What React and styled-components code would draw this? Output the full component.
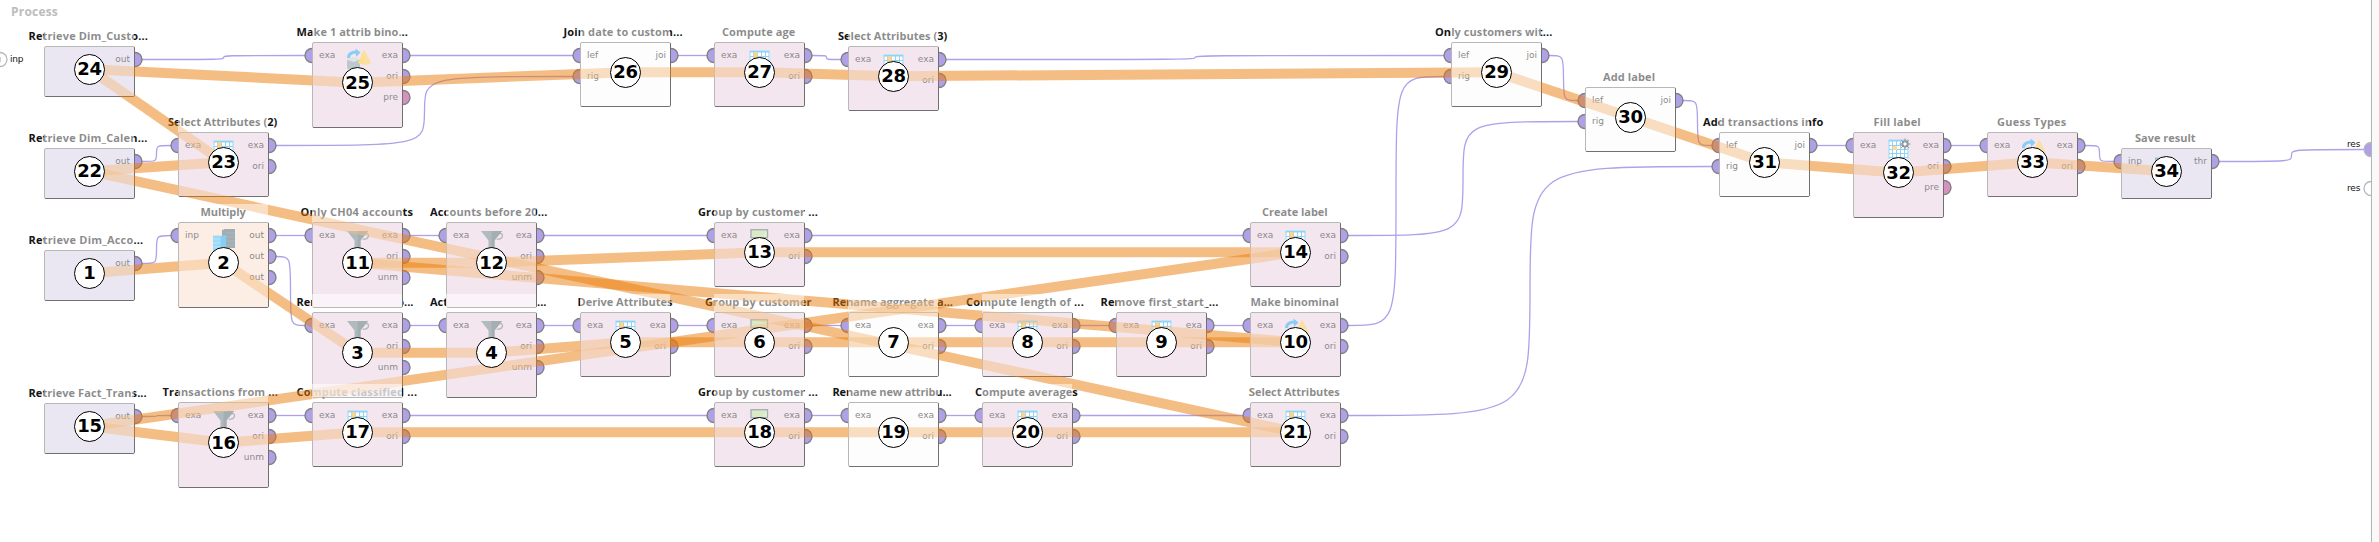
import React, { useLayoutEffect, useRef, useState } from "react";
import styled, { createGlobalStyle } from "styled-components";

const Global = createGlobalStyle`
  * { box-sizing: border-box; }
  body { margin: 0; background: #fff; overflow: hidden; }
`;

const TITLE_HEIGHT = 18;
const NODE_WIDTH = 91;
const HEIGHTS = { source: 51, small: 65, tall: 86 };
const TONES = { lavender: "#d5cfe7", pink: "#e9cddf", peach: "#fbddcb", plain: "#fafafa" };

const node = (id, x, y, size, tone, title, left, right, ins, outs, icon) => ({
  id, x, y, h: HEIGHTS[size], tone, title, left, right, ins, outs, icon,
});

const EO = ["exa", "ori"];
const EOU = ["exa", "ori", "unm"];
const EOP = ["exa", "ori", "pre"];

const NODES = [
  node(3, 312, 312, "tall", "pink", ["Rem", "o..."], 296.5, 413.5, ["exa"], EOU, "funnel"),
  node(4, 446, 312, "tall", "pink", ["Act", "..."], 430, 546.5, ["exa"], EOU, "funnel"),
  node(24, 44, 46, "source", "lavender", "Retrieve Dim_Custo...", 28.5, 148.5, [], ["out"]),
  node(22, 44, 148, "source", "lavender", "Retrieve Dim_Calen...", 28.5, 147.5, [], ["out"]),
  node(1, 44, 250, "source", "lavender", "Retrieve Dim_Acco...", 28.5, 143.5, [], ["out"]),
  node(15, 44, 403, "source", "lavender", "Retrieve Fact_Trans...", 28.5, 147, [], ["out"]),
  node(23, 178, 132, "small", "pink", "Select Attributes (2)", 168, 277.5, ["exa"], EO, "table"),
  node(2, 178, 222, "tall", "peach", "Multiply", 200.5, 246, ["inp"], ["out", "out", "out"], "copies"),
  node(16, 178, 402, "tall", "pink", "Transactions from ...", 162.5, 278.5, ["exa"], EOU, "funnel"),
  node(25, 312, 42, "tall", "pink", "Make 1 attrib bino...", 296.5, 407.5, ["exa"], EOP, "convert"),
  node(11, 312, 222, "tall", "pink", "Only CH04 accounts", 300.5, 413.5, ["exa"], EOU, "funnel"),
  node(17, 312, 402, "small", "pink", "Compute classified ...", 296.5, 417, ["exa"], EO, "table"),
  node(12, 446, 222, "tall", "pink", "Accounts before 20...", 430, 547.5, ["exa"], EOU, "funnel"),
  node(26, 580, 42, "small", "plain", "Join date to custom...", 563.5, 682.5, ["lef", "rig"], ["joi"]),
  node(5, 580, 312, "small", "pink", "Derive Attributes", 577.5, 672.5, ["exa"], EO, "table"),
  node(27, 714, 42, "small", "pink", "Compute age", 722, 795, ["exa"], EO, "table"),
  node(13, 714, 222, "small", "pink", "Group by customer ...", 698, 817.5, ["exa"], EO, "group"),
  node(6, 714, 312, "small", "pink", "Group by customer", 705, 811.5, ["exa"], EO, "group"),
  node(18, 714, 402, "small", "pink", "Group by customer ...", 698, 817.5, ["exa"], EO, "group"),
  node(28, 848, 46, "small", "pink", "Select Attributes (3)", 838, 947.5, ["exa"], EO, "table"),
  node(7, 848, 312, "small", "plain", "Rename aggregate a...", 832.5, 952.5, ["exa"], EO),
  node(19, 848, 402, "small", "plain", "Rename new attribu...", 832.5, 951.5, ["exa"], EO),
  node(8, 982, 312, "small", "pink", "Compute length of ...", 966, 1083.5, ["exa"], EO, "table"),
  node(20, 982, 402, "small", "pink", "Compute averages", 975, 1077.5, ["exa"], EO, "table"),
  node(9, 1116, 312, "small", "pink", "Remove first_start_...", 1100.5, 1218.5, ["exa"], EO, "table"),
  node(14, 1250, 222, "small", "pink", "Create label", 1262, 1327.5, ["exa"], EO, "table"),
  node(10, 1250, 312, "small", "pink", "Make binominal", 1250.5, 1339, ["exa"], EO, "convert"),
  node(21, 1250, 402, "small", "pink", "Select Attributes", 1249, 1339.5, ["exa"], EO, "table"),
  node(29, 1451, 42, "small", "plain", "Only customers wit...", 1435, 1552.5, ["lef", "rig"], ["joi"]),
  node(30, 1585, 87, "small", "plain", "Add label", 1603, 1655, ["lef", "rig"], ["joi"]),
  node(31, 1719, 132, "small", "plain", "Add transactions info", 1703, 1823.5, ["lef", "rig"], ["joi"]),
  node(32, 1853, 132, "tall", "pink", "Fill label", 1873.5, 1921, ["exa"], EOP, "gridgear"),
  node(33, 1987, 132, "small", "pink", "Guess Types", 1997, 2066.5, ["exa"], EO, "convert"),
  node(34, 2121, 148, "source", "lavender", "Save result", 2135, 2196, ["inp"], ["thr"], "disk"),
];

const byId = Object.fromEntries(NODES.map((n) => [n.id, n]));

/* [from node, output index, to node, input index] */
const WIRES = [
  [24, 0, 25, 0], [22, 0, 23, 0], [1, 0, 2, 0], [15, 0, 16, 0],
  [2, 0, 11, 0], [2, 1, 3, 0], [11, 0, 12, 0], [3, 0, 4, 0],
  [16, 0, 17, 0], [12, 0, 13, 0], [4, 0, 5, 0], [17, 0, 18, 0],
  [25, 0, 26, 0], [23, 0, 26, 1], [26, 0, 27, 0], [27, 0, 28, 0],
  [13, 0, 14, 0], [5, 0, 6, 0], [6, 0, 7, 0], [7, 0, 8, 0],
  [8, 0, 9, 0], [9, 0, 10, 0], [18, 0, 19, 0], [19, 0, 20, 0],
  [20, 0, 21, 0], [28, 0, 29, 0], [10, 0, 29, 1], [14, 0, 30, 1],
  [21, 0, 31, 1], [29, 0, 30, 0], [30, 0, 31, 0], [31, 0, 32, 0],
  [32, 0, 33, 0], [33, 0, 34, 0],
];

const portY = (n, i) => n.y + 13.5 + i * 21;
const centre = (n) => [n.x + 45.5, n.y + n.h / 2 - 2.3];

const curve = (x1, y1, x2, y2) => {
  const mx = (x1 + x2) / 2;
  const my = (y1 + y2) / 2;
  return `M${x1} ${y1}C${mx} ${y1} ${mx} ${y1} ${mx} ${my}C${mx} ${y2} ${mx} ${y2} ${x2} ${y2}`;
};

const Canvas = styled.main`
  position: relative;
  width: 2379px;
  height: 542px;
  background: #fff;
  overflow: hidden;
`;

const Heading = styled.h1`
  margin: 0;
  padding: 3px 0 0 11px;
  font: 700 12px/17px "Open Sans", "Noto Sans", sans-serif;
  letter-spacing: 0.2px;
  color: #bcbcbc;
`;

const Layer = styled.svg`
  position: absolute;
  inset: 0;
  pointer-events: none;
`;

const NodeRoot = styled.section`
  position: absolute;
  left: ${(p) => p.$x}px;
  top: ${(p) => p.$y - TITLE_HEIGHT}px;
  width: ${NODE_WIDTH}px;
`;

const TitleRow = styled.div`
  display: flex;
  justify-content: space-between;
  height: ${TITLE_HEIGHT}px;
  width: ${(p) => p.$width}px;
  margin-left: ${(p) => p.$shift}px;
  font: 700 11px/16px "Open Sans", "Noto Sans", sans-serif;
  color: #141414;
  white-space: nowrap;
`;

const Body = styled.div`
  position: relative;
  display: flex;
  justify-content: space-between;
  height: ${(p) => p.$h}px;
  padding: 1.5px 4px 0 6px;
  border: 1px solid #707070;
  border-radius: 2px;
  background: ${(p) => TONES[p.$tone]};
`;

const PortLabels = styled.div`
  display: flex;
  flex-direction: column;
  align-items: ${(p) => (p.$end ? "flex-end" : "flex-start")};
  font: 400 9px/21px "DejaVu Sans", sans-serif;
  color: #080808;
`;

const IconSlot = styled.svg`
  position: absolute;
  left: 33px;
  top: 5px;
`;

const Veil = styled.div`
  position: absolute;
  left: ${(p) => p.$x}px;
  top: ${(p) => p.$y - TITLE_HEIGHT}px;
  width: ${NODE_WIDTH - 1}px;
  height: ${(p) => p.$h + TITLE_HEIGHT - 1}px;
  background: rgba(255, 255, 255, 0.5);
`;

const StepBadge = styled.div`
  position: absolute;
  left: ${(p) => p.$cx - 15.5}px;
  top: ${(p) => p.$cy - 15.5}px;
  width: 31px;
  height: 31px;
  display: flex;
  align-items: center;
  justify-content: center;
  border: 1px solid #000;
  border-radius: 50%;
  background: #fff;
  color: #000;
  font: 700 18px/1 "DejaVu Sans", sans-serif;
  letter-spacing: -0.2px;
`;

const EdgeLabel = styled.span`
  position: absolute;
  left: ${(p) => p.$x}px;
  top: ${(p) => p.$y}px;
  font: 400 9px/12px "DejaVu Sans", sans-serif;
  letter-spacing: -0.2px;
  color: #111;
`;

const EdgePanel = styled.aside`
  position: absolute;
  right: 0;
  top: 0;
  bottom: 0;
  width: 8px;
  border-left: 1px solid #b4b4b4;
  background: #f9f9f9;
`;

function Table({ full }) {
  return (
    <g>
      <rect x="0.5" y="0.5" width="20" height={full ? 20 : 19} fill="#fff" />
      <path d="M0.5 .5h20v2h-20z" fill="#1fa6ec" />
      <path
        d="M1 2v18M4.500 2v18M8.500 2v18M12.500 2v18M16.500 2v18M20 2v18M1 6.500h19M1 10.500h19M1 14.500h19M1 18.500h19"
        stroke="#1fa6ec"
        strokeWidth="1"
        fill="none"
      />
      {full ? (
        <rect x="4.500" y="7" width="4.500" height="4" fill="#f9b430" />
      ) : (
        <rect x="4.500" y="2" width="4" height="10" fill="#f9a81c" />
      )}
    </g>
  );
}

const ICONS = {
  table: <g transform="translate(0 1)"><Table /></g>,
  gridgear: (
    <g>
      <Table full />
      <circle cx="17" cy="5" r="3" fill="#fff" stroke="#222" strokeWidth="1.2" />
      <path d="M17 -.5v11M11.500 5h11M13.200 1.200l7.600 7.600M20.800 1.200l-7.600 7.600" stroke="#222" strokeWidth="1" />
      <circle cx="17" cy="5" r="1.3" fill="#fff" />
    </g>
  ),
  funnel: (
    <g transform="translate(0 1)">
      <path d="M16.500 3.500h3.200q2.200 .4 1.700 3q-.8 2.800-5.600 2.800" fill="none" stroke="#5d7079" strokeWidth="1.300" />
      <path d="M0 1h21l-7.500 9.500v9h-6v-9z" fill="#62767f" />
      <path d="M10.500 1h10.500l-7.500 9.500v9h-3z" fill="#485f69" />
    </g>
  ),
  convert: (
    <g>
      <path d="M0 11l6-2.500 7 2v9l-6 2-7-2z" fill="#78909a" />
      <path d="M0 11l6-2.500 7 2-6 2.500z" fill="#b9c9d0" />
      <path d="M1.500 9q0-6 8-6" fill="none" stroke="#0f9be8" strokeWidth="3" />
      <path d="M8.500 -0.500l5 4-4.500 4.500z" fill="#0f9be8" />
      <path d="M17 .5l7 13.500q-6 3-13 0z" fill="#ffbd1f" />
      <path d="M17 .5l7 13.500q-3 1.700-7 1.700z" fill="#efc24a" />
    </g>
  ),
  copies: (
    <g>
      <path d="M9 1l3-1h10v19h-13z" fill="#3e5a68" />
      <path d="M13 4h9M13 8h9M13 12h9M13 16h9" stroke="#60757f" strokeWidth=".8" />
      <path d="M0 7h8l5-1v16h-13z" fill="#0d9ee8" />
      <path d="M0 6.500h7.500v15h-7.500z" fill="#38b5f3" />
      <path d="M0 10h7.500M0 14h7.500M0 18h7.500" stroke="#7dd0f8" strokeWidth=".8" />
    </g>
  ),
  group: (
    <g>
      <rect x="2" y="0.700" width="16.500" height="8" fill="#b6d58c" stroke="#48646a" strokeWidth="1.400" />
      <path d="M3.500 7.500h10.500l3.500-5.500v5.500z" fill="#c8dfa6" />
      <rect x="2" y="11" width="16.500" height="8" fill="#5d7580" />
    </g>
  ),
  disk: <path d="M-1 2.500h11v4h-11z" fill="#4f7882" />,
};

function Title({ text, width, shift }) {
  const ref = useRef(null);
  const [tracking, setTracking] = useState(0);
  const parts = Array.isArray(text);
  useLayoutEffect(() => {
    if (parts || !ref.current) return;
    setTracking((width - ref.current.offsetWidth) / text.length);
  }, [text, width, parts]);
  return (
    <TitleRow $width={width} $shift={shift}>
      {parts ? (
        text.map((t) => <span key={t}>{t}</span>)
      ) : (
        <span ref={ref} style={{ letterSpacing: tracking }}>{text}</span>
      )}
    </TitleRow>
  );
}

function Operator({ n }) {
  return (
    <NodeRoot $x={n.x} $y={n.y}>
      <Title text={n.title} width={n.right - n.left} shift={n.left - n.x} />
      <Body $h={n.h} $tone={n.tone}>
        <PortLabels>{n.ins.map((t, i) => <span key={i}>{t}</span>)}</PortLabels>
        {n.icon && (
          <IconSlot width="26" height="24" viewBox="-1 -1 26 24">{ICONS[n.icon]}</IconSlot>
        )}
        <PortLabels $end>{n.outs.map((t, i) => <span key={i}>{t}</span>)}</PortLabels>
      </Body>
    </NodeRoot>
  );
}

function Port({ x, y, side, label }) {
  const sweep = side === "in" ? 0 : 1;
  return (
    <path
      d={`M${x} ${y - 7}A7 7 0 0 ${sweep} ${x} ${y + 7}`}
      fill={label === "pre" ? "#d592c0" : "#b0a0e8"}
      stroke="#808080"
      strokeWidth="1.400"
    />
  );
}

export default function App() {
  const steps = [...NODES].sort((a, b) => a.id - b.id);
  return (
    <Canvas>
      <Global />
      <Heading>Process</Heading>
      <EdgePanel />
      <Layer width="2379" height="542">
        <g fill="none" stroke="#b0a0ea" strokeWidth="1.300">
          {WIRES.map(([a, o, b, i]) => (
            <path
              key={`${a}-${o}-${b}`}
              d={curve(byId[a].x + 98, portY(byId[a], o), byId[b].x - 7, portY(byId[b], i))}
            />
          ))}
          <path d={curve(2219, 161.5, 2364, 149.5)} />
        </g>
        {NODES.map((n) => (
          <g key={n.id}>
            {n.ins.map((l, i) => <Port key={`i${i}`} x={n.x} y={portY(n, i)} side="in" label={l} />)}
            {n.outs.map((l, i) => <Port key={`o${i}`} x={n.x + 91} y={portY(n, i)} side="out" label={l} />)}
          </g>
        ))}
        <g stroke="#b8b8b8" strokeWidth="1.300">
          <path d="M0 52.500A7 7 0 0 1 0 66.500" fill="#fff" />
          <path d="M0 57v5" />
          <path d="M2371 142.500A7 7 0 0 0 2371 156.500" fill="#b0a0e8" />
          <path d="M2371 181.500A7 7 0 0 0 2371 195.500" fill="#fff" />
        </g>
      </Layer>
      <EdgeLabel $x={10} $y={53}>inp</EdgeLabel>
      <EdgeLabel $x={2347} $y={138}>res</EdgeLabel>
      <EdgeLabel $x={2347} $y={182}>res</EdgeLabel>
      {NODES.map((n) => <Operator key={n.id} n={n} />)}
      <Layer width="2379" height="542">
        <g stroke="rgba(233,123,7,0.5)" strokeWidth="10">
          {steps.slice(1).map((n, i) => {
            const [x1, y1] = centre(steps[i]);
            const [x2, y2] = centre(n);
            return <line key={n.id} x1={x1} y1={y1} x2={x2} y2={y2} />;
          })}
        </g>
      </Layer>
      {NODES.map((n) => <Veil key={n.id} $x={n.x} $y={n.y} $h={n.h} />)}
      {steps.map((n) => {
        const [cx, cy] = centre(n);
        return <StepBadge key={n.id} $cx={cx} $cy={cy}>{n.id}</StepBadge>;
      })}
    </Canvas>
  );
}
